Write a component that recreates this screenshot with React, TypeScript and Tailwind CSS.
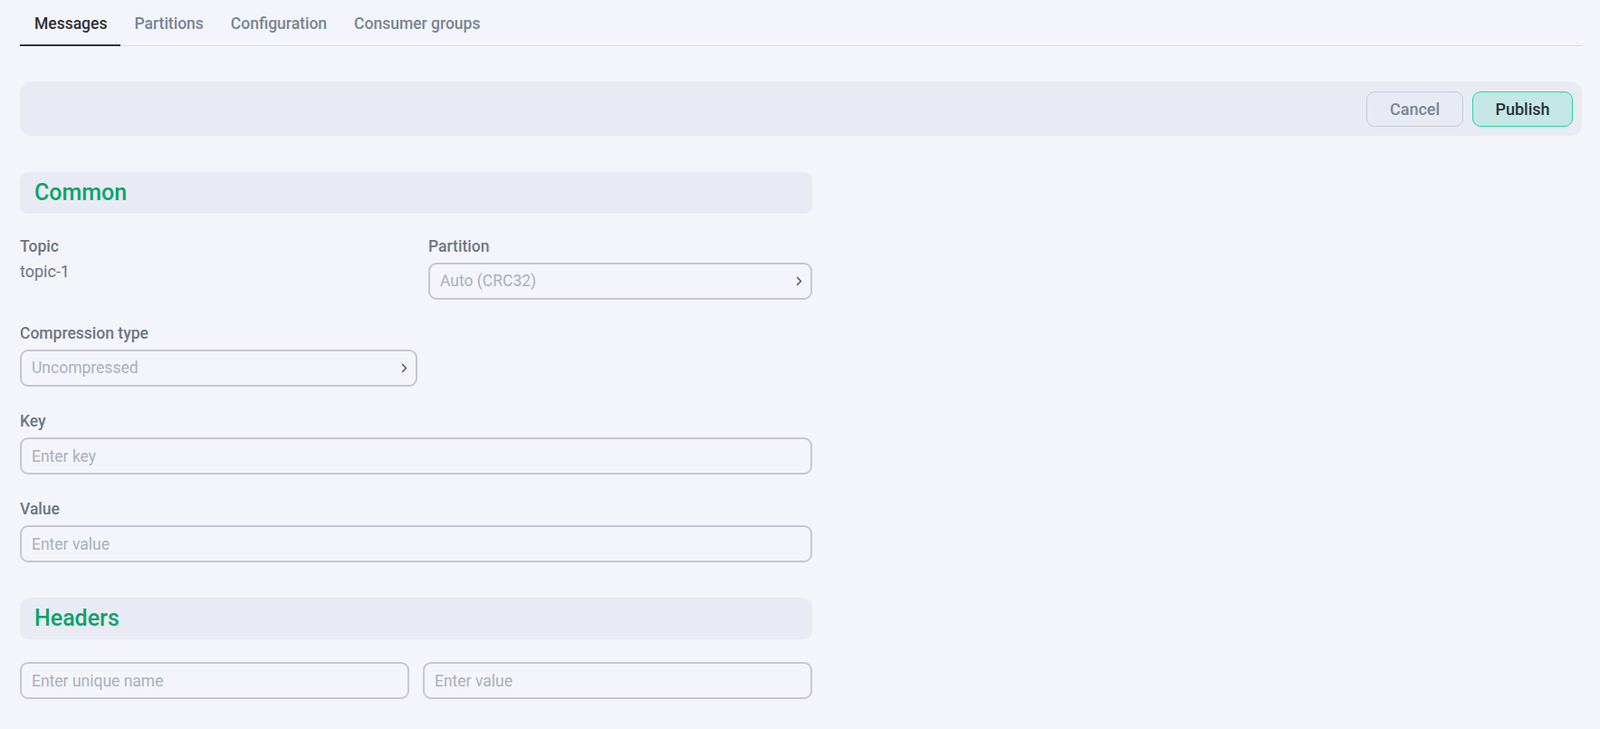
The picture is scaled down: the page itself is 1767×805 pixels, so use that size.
import React from "react";

const font = { fontFamily: "Roboto, 'Noto Sans', sans-serif" };

function Chevron() {
  return (
    <svg width="7" height="11" viewBox="0 0 7 11" fill="none" className="shrink-0">
      <path d="M1.5 1.5l4 4-4 4" stroke="#3d4552" strokeWidth="1.3" strokeLinecap="round" strokeLinejoin="round" />
    </svg>
  );
}

function Label({ children }: { children: React.ReactNode }) {
  return <div className="h-[20px] leading-[20px] text-[17.5px] font-medium text-[#6a7683] mb-[8px]">{children}</div>;
}

function SelectBox({ value }: { value: string }) {
  return (
    <button className="w-full h-[41px] rounded-[9px] border-2 border-[#c5c7d1] bg-transparent pl-[11px] pr-[9px] flex items-center justify-between text-left">
      <span className="text-[17.5px] text-[#a9b0ba]">{value}</span>
      <Chevron />
    </button>
  );
}

function TextInput({ placeholder }: { placeholder: string }) {
  return (
    <input
      placeholder={placeholder}
      className="w-full h-[41px] rounded-[9px] border-2 border-[#c5c7d1] bg-transparent px-[11px] text-[17.5px] text-[#2a2f3a] placeholder:text-[#a9b0ba] outline-none"
    />
  );
}

function SectionTitle({ children }: { children: React.ReactNode }) {
  return (
    <div className="h-[46px] rounded-[9px] bg-[#e8ebf4] flex items-center pl-[16px]">
      <h2 className="text-[25px] font-medium text-[#0ca36a]">{children}</h2>
    </div>
  );
}

export default function App() {
  const tabs = ["Messages", "Partitions", "Configuration", "Consumer groups"];

  return (
    <div style={font} className="min-h-screen bg-[#f4f5fa] pl-[22px] pr-[20px]">
      {/* Tabs */}
      <div className="flex border-b border-[#d6dcf0] h-[51px]">
        {tabs.map((t, i) => (
          <div
            key={t}
            className={
              i === 0
                ? "pl-[16px] pr-[15px] pt-[3px] flex items-center text-[17.5px] font-medium text-[#2a2f3a] border-b-2 border-[#2f3540] -mb-px"
                : "px-[15px] pt-[3px] flex items-center text-[17.5px] font-medium text-[#768493]"
            }
          >
            {t}
          </div>
        ))}
      </div>

      {/* Toolbar */}
      <div className="mt-[39px] h-[60px] rounded-[13px] bg-[#e8ebf4] flex items-center justify-end gap-[10px] pr-[10px]">
        <button className="h-[39px] w-[107px] rounded-[9px] border border-[#c9cbd6] text-[18px] font-medium text-[#7a8591]">
          Cancel
        </button>
        <button className="h-[39px] w-[111px] rounded-[9px] border border-[#2dd4a7] bg-[#c4e7e5] text-[18px] font-medium text-[#2a2f3a]">
          Publish
        </button>
      </div>

      <div className="w-[875px]">
        {/* Common */}
        <div className="mt-[40px]">
          <SectionTitle>Common</SectionTitle>
        </div>

        <div className="mt-[26px] flex">
          <div className="w-[451px]">
            <Label>Topic</Label>
            <div className="text-[18px] text-[#6a7683] leading-[22px] -mt-[1px]">topic-1</div>
          </div>
          <div className="flex-1">
            <Label>Partition</Label>
            <SelectBox value="Auto (CRC32)" />
          </div>
        </div>

        <div className="mt-[27px] w-[439px]">
          <Label>Compression type</Label>
          <SelectBox value="Uncompressed" />
        </div>

        <div className="mt-[28px]">
          <Label>Key</Label>
          <TextInput placeholder="Enter key" />
        </div>

        <div className="mt-[28px]">
          <Label>Value</Label>
          <TextInput placeholder="Enter value" />
        </div>

        {/* Headers */}
        <div className="mt-[39px]">
          <SectionTitle>Headers</SectionTitle>
        </div>

        <div className="mt-[25px] grid grid-cols-2 gap-[15px]">
          <TextInput placeholder="Enter unique name" />
          <TextInput placeholder="Enter value" />
        </div>
      </div>
    </div>
  );
}
